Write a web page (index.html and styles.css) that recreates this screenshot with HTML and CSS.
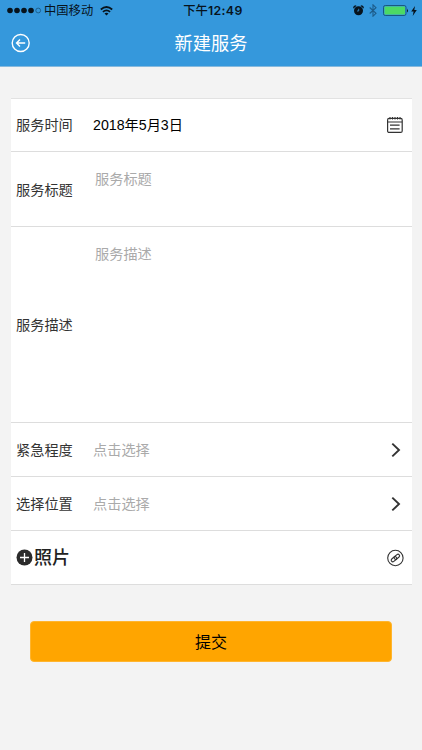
FILE: index.html
```html
<!DOCTYPE html>
<html lang="zh-CN">
<head>
  <meta charset="UTF-8" />
  <meta name="viewport" content="width=device-width, initial-scale=1.0"/>
  <title>新建服务</title>
  <link rel="stylesheet" href="styles.css">
</head>
<body>
  <header>
    <div class="status">
      <div class="carrier">
        <svg class="signal" width="35" height="7" viewBox="0 0 35 7">
          <circle cx="3" cy="3.5" r="2.8"/><circle cx="10" cy="3.5" r="2.8"/><circle cx="17" cy="3.5" r="2.8"/><circle cx="24" cy="3.5" r="2.8"/>
          <circle cx="31.2" cy="3.5" r="2.4" fill="none" stroke="#12496f" stroke-width=".7"/>
        </svg>
        <span>中国移动</span>
        <svg class="wifi" width="13" height="10" viewBox="0 0 13 10" fill="none" stroke="#07131c" stroke-width="1.7">
          <path d="M.8 3.5Q6.5-1.5 12.2 3.5M2.9 5.9Q6.5 2.9 10.1 5.9"/>
          <path d="M4.5 7.5Q6.5 6 8.5 7.5L6.5 9.5Z" fill="#07131c" stroke="none"/>
        </svg>
      </div>
      <div class="clock">下午<b>12:49</b></div>
      <div class="indicators">
        <svg width="11" height="11" viewBox="0 0 11 11">
          <path d="M.8 3.2Q.7.9 3.2.8M7.8.8Q10.3.9 10.2 3.2" fill="none" stroke="#07131c" stroke-width="1.3"/>
          <circle cx="5.5" cy="5.8" r="4.5" fill="#07131c"/>
          <path d="M5.7 3.8V6H4" fill="none" stroke="#3598dc" stroke-width=".8"/>
        </svg>
        <svg class="bluetooth" width="8" height="13" viewBox="0 0 8 13" fill="none" stroke="#1d5c8a" stroke-width="1.1">
          <path d="M.7 3.5L7 9.3L4 12.2V.8L7 3.7L.7 9.5"/>
        </svg>
        <svg class="battery" width="26" height="11" viewBox="0 0 26 11">
          <rect x=".5" y=".5" width="22.5" height="10" rx="1.8" fill="#3598dc" stroke="#174f76" stroke-width=".9"/>
          <rect x="1.5" y="1.5" width="20.5" height="8" rx=".8" fill="#4cd964"/>
          <path d="M24 3.5Q25.8 5.5 24 7.5Z" fill="#07131c"/>
        </svg>
        <svg class="bolt" width="6" height="10" viewBox="0 0 6 10"><path d="M4 0L.2 5.6H2.6L1.7 10L5.8 4H3.3Z" fill="#07131c"/></svg>
      </div>
    </div>
    <div class="nav">
      <svg class="back" width="20" height="20" viewBox="0 0 20 20" fill="none" stroke="#fff" stroke-width="1.4">
        <circle cx="9.7" cy="10" r="8.5"/>
        <path d="M14.2 10H5.7M9 6.4L5.5 10L9 13.6"/>
      </svg>
      <h1>新建服务</h1>
    </div>
  </header>

  <main>
    <div class="form">
      <div class="row">
        <label>服务时间</label>
        <div class="value">2018年5月3日</div>
        <svg class="icon" width="18" height="18" viewBox="0 0 18 18" fill="none" stroke="#333" stroke-width="1.2">
          <rect x="1.6" y="2.4" width="14.6" height="14" rx="1.5"/>
          <path d="M1.6 6H16.2M4 9.2H13.6M4 12.8H13.6"/>
          <path d="M4 1V3.5M6.5 1V3.5M9 1V3.5M11.5 1V3.5M14 1V3.5" stroke-width="1"/>
        </svg>
      </div>
      <div class="row row-title">
        <label>服务标题</label>
        <div class="area">服务标题</div>
      </div>
      <div class="row row-desc">
        <label>服务描述</label>
        <div class="area">服务描述</div>
      </div>
      <div class="row">
        <label>紧急程度</label>
        <div class="value hint">点击选择</div>
        <svg class="icon arrow" width="10" height="16" viewBox="0 0 10 16" fill="none" stroke="#333" stroke-width="1.9"><path d="M1.3 1.6L8 8L1.3 14.4"/></svg>
      </div>
      <div class="row">
        <label>选择位置</label>
        <div class="value hint">点击选择</div>
        <svg class="icon arrow" width="10" height="16" viewBox="0 0 10 16" fill="none" stroke="#333" stroke-width="1.9"><path d="M1.3 1.6L8 8L1.3 14.4"/></svg>
      </div>
      <div class="row photo">
        <svg class="plus" width="17" height="17" viewBox="0 0 17 17">
          <circle cx="8.5" cy="8.5" r="8" fill="#2b2b2b"/>
          <path d="M8.5 4V13M4 8.5H13" stroke="#fff" stroke-width="1.3"/>
        </svg>
        <div class="photo-text">照片</div>
        <svg class="icon" width="18" height="18" viewBox="0 0 18 18" fill="none" stroke="#333" stroke-width="1.1">
          <circle cx="9.4" cy="9" r="7.7"/>
          <g transform="rotate(-40 9.4 9)">
            <rect x="4.4" y="7.4" width="6.2" height="3.2" rx="1.6"/>
            <rect x="8.2" y="7.4" width="6.2" height="3.2" rx="1.6"/>
          </g>
        </svg>
      </div>
    </div>
    <button>提交</button>
  </main>
</body>
</html>
```
FILE: styles.css
```css
* { box-sizing: border-box; }
body {
  margin: 0;
  min-height: 750px;
  background: #f3f3f3; color: #333;
  font-family: "Liberation Sans", "Noto Sans CJK SC", sans-serif;
}
svg { display: block; flex: none; }
header {
  height: 67px;
  background: #3598dc;
  border-bottom: 1px solid #86b9dd;
}
.status {
  display: grid;
  grid-template-columns: 1fr auto 1fr;
  align-items: center;
  height: 21px; padding: 0 5px 0 7px;
  color: #07131c;
  font-size: 12.3px; line-height: 20px;
}
.carrier, .indicators { display: flex; align-items: center; }
.carrier span { padding-top: 1px; }
.indicators { justify-content: flex-end; }
.signal { margin-right: 2px; fill: #07131c; }
.wifi { margin-left: 7px; }
.clock { padding: 1px 0 0 2px; font-weight: 500; }
.clock b {
  font-family: Inter, sans-serif;
  font-weight: 600; letter-spacing: 0.4px;
}
.bluetooth { margin-left: 5px; }
.battery { margin-left: 6px; }
.bolt { margin-left: 2px; }
.nav {
  display: grid;
  grid-template-columns: 20px 1fr 20px;
  align-items: center;
  height: 44px; padding: 0 11px;
}
h1 {
  margin: 0; padding-bottom: 2px;
  color: #fff;
  font-size: 18.2px; font-weight: 400;
  text-align: center;
}
main { padding: 31px 10.5px 0; }
.form {
  background: #fff;
  border-top: 1px solid #e2e2e2;
}
.row {
  display: flex; align-items: center;
  height: 54px; padding: 0 7.5px 0 5.5px;
  border-bottom: 1px solid #ddd;
  font-size: 14.2px;
}
.row:first-child { height: 53px; }
.row-title { height: 75px; }
.row-desc { height: 196px; }
label { width: 77px; padding-bottom: 2px; }
.row-title label { padding-bottom: 1px; }
.value { flex: 1; padding-bottom: 2px; color: #000; }
.hint { color: #aaa; }
.area {
  flex: 1; align-self: stretch;
  padding: 17px 0 0 2px;
  color: #aaa;
  line-height: 21px;
}
.arrow { margin-right: 3px; }
.plus { margin-right: 1px; }
.photo-text {
  flex: 1;
  padding-bottom: 3px;
  color: #222;
  font-size: 18px; font-weight: 500;
}
button {
  display: block;
  width: 362px; height: 41px;
  margin: 36px 0 0 19.5px; padding: 0 0 1px;
  border: 1px solid #ffb52e; border-radius: 4px;
  background: #ffa500; color: #000;
  font-family: inherit; font-size: 16px;
}
```
